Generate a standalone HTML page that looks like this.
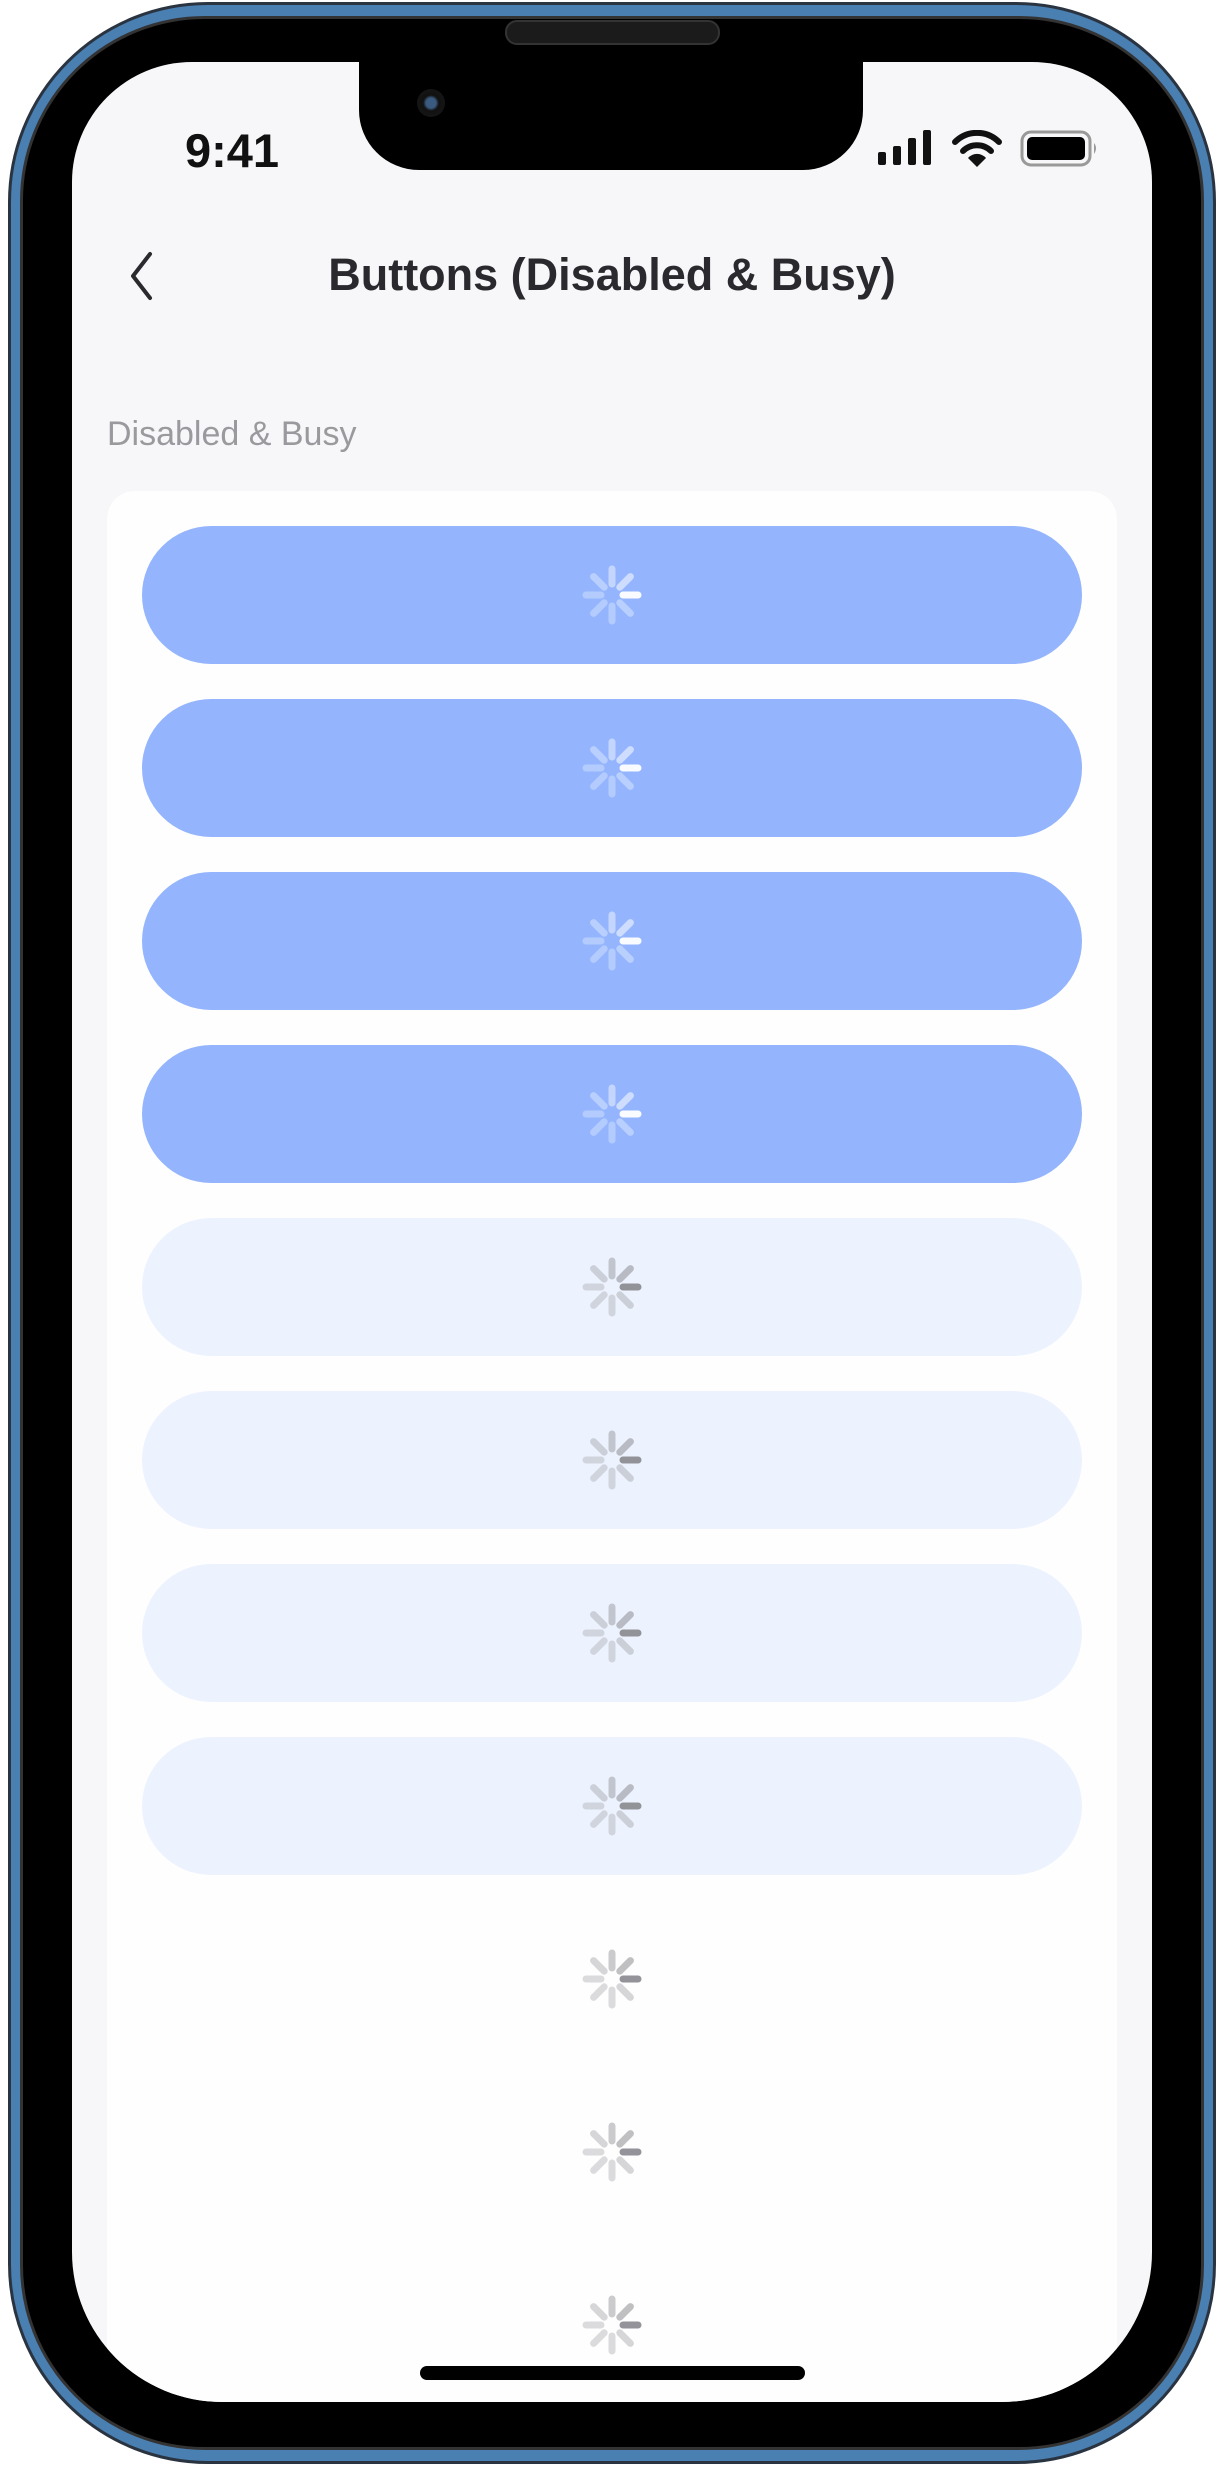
<!DOCTYPE html>
<html><head><meta charset="utf-8"><style>
*{margin:0;padding:0;box-sizing:border-box}
body{width:1224px;height:2466px;background:#fff;position:relative;overflow:hidden;font-family:"Liberation Sans",sans-serif}
.frame{position:absolute;left:8px;top:2px;width:1208px;height:2462px;border-radius:200px;background:#4a7fb2;border:3px solid #2a3440}
.bezel{position:absolute;left:20px;top:16px;width:1184px;height:2434px;border-radius:185px;background:#000;border:3px solid #333}
.screen{position:absolute;left:72px;top:62px;width:1080px;height:2340px;border-radius:120px 120px 150px 150px;background:#f7f6f9;overflow:hidden}
.notch{position:absolute;left:287px;top:-2px;width:504px;height:110px;background:#000;border-radius:0 0 60px 60px}
.cam{position:absolute;left:58px;top:29px;width:28px;height:28px;border-radius:50%;background:radial-gradient(circle,#3a5a80 0 25%,#111 40%,#1a1a1a 100%)}
.speaker{position:absolute;left:505px;top:20px;width:215px;height:25px;border-radius:12px;background:#1b1b1b;border:2px solid #333}
.time{position:absolute;left:113px;top:65px;font-size:47px;line-height:1;font-weight:bold;color:#111}
.title{position:absolute;left:0;width:1080px;top:190px;line-height:1;text-align:center;font-size:45px;font-weight:bold;color:#2a2a2e}
.label{position:absolute;left:35px;top:355px;line-height:1;font-size:34px;color:#9a9a9e}
.card{position:absolute;left:35px;top:429px;width:1010px;height:2000px;background:#fefefe;border-radius:28px}
.btn{position:absolute;left:70px;width:940px;height:138px;border-radius:69px}
.b1{background:#94b5fd}.b2{background:#edf3fe}
.sp{position:absolute;left:50%;top:50%;width:60px;height:60px;margin:-30px 0 0 -30px}
.home{position:absolute;left:348px;top:2304px;width:385px;height:14px;border-radius:7px;background:#000}
</style></head><body>
<div class="frame"></div>
<div class="bezel"></div>
<div class="speaker"></div>
<div class="screen">
 <div class="notch"><div class="cam"></div></div>
 <div class="time">9:41</div>
 <svg style="position:absolute;left:806px;top:68px" width="60" height="36"><rect x="0" y="22" width="8" height="13" rx="2" fill="#111"/><rect x="15" y="16" width="8" height="19" rx="2" fill="#111"/><rect x="30" y="8" width="8" height="27" rx="2" fill="#111"/><rect x="45" y="0" width="8" height="35" rx="2" fill="#111"/></svg>
 <svg style="position:absolute;left:880px;top:68px" width="50" height="38" viewBox="0 0 50 38"><path d="M3 12 A31 31 0 0 1 47 12" stroke="#111" stroke-width="6" fill="none" stroke-linecap="round"/><path d="M11 21 A20 20 0 0 1 39 21" stroke="#111" stroke-width="6" fill="none" stroke-linecap="round"/><path d="M16 28 L25 37 L34 28 A12 12 0 0 0 16 28Z" fill="#111"/></svg>
 <svg style="position:absolute;left:948px;top:68px" width="80" height="38"><rect x="2" y="2" width="68" height="33" rx="9" fill="none" stroke="#999" stroke-width="3"/><rect x="7" y="7" width="58" height="23" rx="5" fill="#000"/><path d="M74 13 q4 5 0 11z" fill="#999"/></svg>
 <svg style="position:absolute;left:52px;top:188px" width="34" height="52"><path d="M26 4 L9 26 L26 48" stroke="#2a2a2e" stroke-width="4" fill="none" stroke-linecap="round" stroke-linejoin="round"/></svg>
 <div class="title">Buttons (Disabled &amp; Busy)</div>
 <div class="label">Disabled &amp; Busy</div>
 <div class="card"></div>
 <div id="btns"></div>
 <div class="home"></div>
</div>
<script>
var h='';
function sp(c,o){var s='<svg class="sp" viewBox="-30 -30 60 60">';for(var i=0;i<8;i++){var a=-i*45*Math.PI/180;var x1=Math.cos(a)*11,y1=Math.sin(a)*11,x2=Math.cos(a)*26,y2=Math.sin(a)*26;s+='<line x1="'+x1.toFixed(1)+'" y1="'+y1.toFixed(1)+'" x2="'+x2.toFixed(1)+'" y2="'+y2.toFixed(1)+'" stroke="'+c+'" stroke-width="7" stroke-linecap="round" opacity="'+o[i]+'"/>';}return s+'</svg>';}
var ow=[0.95,0.55,0.45,0.35,0.3,0.3,0.3,0.35];
for(var k=0;k<11;k++){var t=464+173*k;var cls=k<4?'b1':(k<8?'b2':'');var c=k<4?'#fff':'#8e8e94';h+='<div class="btn '+cls+'" style="top:'+t+'px">'+sp(c,ow)+'</div>';}
document.getElementById('btns').innerHTML=h;
</script>
</body></html>
